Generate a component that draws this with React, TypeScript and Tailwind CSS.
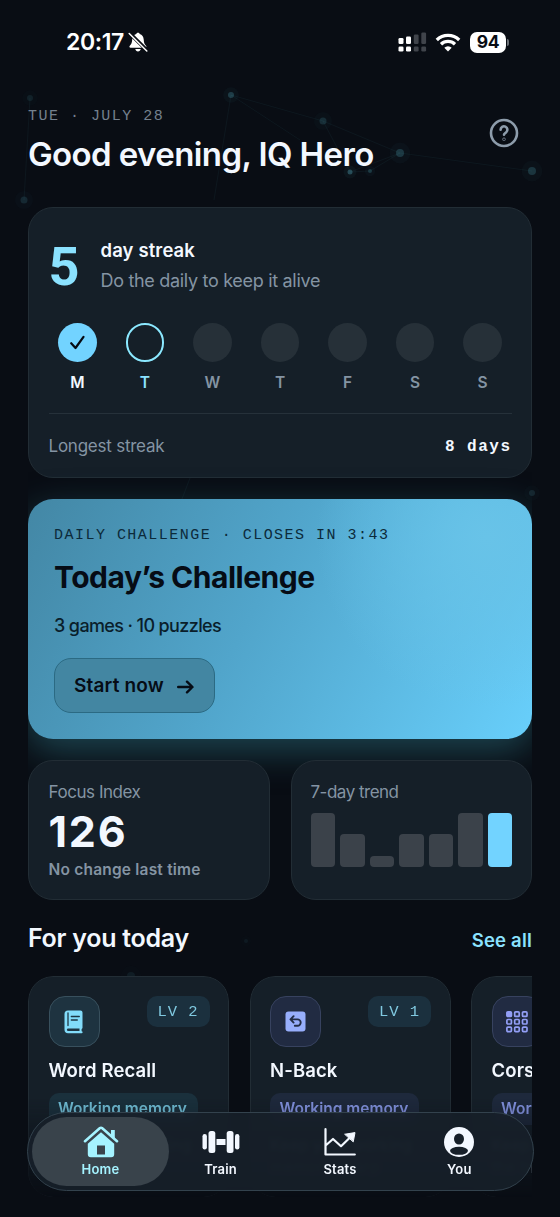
import React from 'react';
import clsx from 'clsx';

interface Game {
  name: string;
  level: number;
  blurb: string[];
  icon: React.ReactNode;
  violet?: boolean;
}

const days = ['M', 'T', 'W', 'T', 'F', 'S', 'S'];
const trend = [53.5, 32.5, 10.5, 32.5, 32.5, 53.5, 53.5];

// Dots and links of the faint network behind the page
const nodes = [
  [30, 98, 3, 0.16], [231, 95, 3, 0.38], [323, 121, 3.5, 0.26], [400, 153, 4, 0.34], [350, 172, 2.5, 0.5], [370, 171, 2, 0.34],
  [532, 171, 4, 0.32], [24, 200, 3.5, 0.22], [532, 493, 3, 0.2], [131, 976, 4, 0.12], [246, 941, 2, 0.1],
];
const links = [
  [231, 95, 323, 121], [231, 95, 300, 140], [323, 121, 400, 153], [323, 121, 350, 172],
  [350, 172, 370, 171], [370, 171, 400, 153], [350, 172, 400, 153], [400, 153, 532, 171], [30, 98, 24, 200],
  [231, 95, 214, 200], [190, 478, 182, 499],
];

const games: Game[] = [
  { name: 'Word Recall', level: 2, blurb: ['Remember, sorting', 'words in order'], icon: <BookIcon /> },
  { name: 'N-Back', level: 1, blurb: ['Keep your working', 'memory sharp'], icon: <BackIcon />, violet: true },
  { name: 'Corsi Blocks', level: 1, blurb: ['Keep track of', 'the blocks'], icon: <GridIcon />, violet: true },
];

function BookIcon() {
  return (
    <svg width="20" height="24" viewBox="0 0 20 24" fill="none">
      <path d="M4 .5h12.500a2 2 0 0 1 2 2v15.200a1.300 1.300 0 0 1-.9 1.200v2.300a1 1 0 0 1 0 2H4A3.500 3.500 0 0 1 .5 19.800V4A3.500 3.500 0 0 1 4 .5Z" fill="#82dcfa" />
      <path d="M4 2.800v12.700M7.300 6.500h8M7.300 10h6" stroke="#1e3644" strokeWidth="1.300" strokeLinecap="round" />
      <path d="M4.200 18.500h11.300v2.600H4.200a1.300 1.300 0 0 1 0-2.600Z" fill="#1e3644" />
    </svg>
  );
}

function BackIcon() {
  return (
    <svg width="21" height="21" viewBox="0 0 21 21" fill="none">
      <rect x=".5" y=".5" width="20" height="20" rx="3" fill="#97aefc" />
      <path d="M8.600 5.200 5.500 8.400l3.100 3.200M5.800 8.400h6.700a3.200 3.200 0 0 1 0 6.400H9.800" stroke="#232d46" strokeWidth="1.900" strokeLinecap="round" strokeLinejoin="round" />
    </svg>
  );
}

function GridIcon() {
  return (
    <svg width="22" height="22" viewBox="0 0 22 22" fill="none" stroke="#929ef5" strokeWidth="1.700">
      {[0, 1, 2].map((r) =>
        [0, 1, 2].map((c) => (
          <rect key={`${r}${c}`} x={0.9 + c * 7.8} y={0.9 + r * 7.6} width="4.500" height="4.500" rx="1" fill={r + c === 0 ? '#929ef5' : 'none'} />
        ))
      )}
    </svg>
  );
}

function HomeIcon() {
  return (
    <svg width="36" height="32" viewBox="0 0 36 32" fill="none">
      <path d="M28 4h3.800v9L28 9.800Z" fill="#a5f3ff" />
      <path d="M2 15.200 16.700 2.300a2 2 0 0 1 2.600 0L34 15.200" stroke="#a5f3ff" strokeWidth="2.600" strokeLinecap="round" />
      <path fillRule="evenodd" d="M18 6.300 31.200 17.800v10.400a3 3 0 0 1-3 3H7.800a3 3 0 0 1-3-3V17.800ZM14 19.500v9h8v-9Z" fill="#a5f3ff" />
    </svg>
  );
}

function TrainIcon() {
  return (
    <svg width="38" height="24" viewBox="0 0 38 24" fill="#f3f8ff">
      <rect x=".5" y="4" width="4.400" height="15.500" rx="2.200" />
      <rect x="6.500" y="1" width="6.800" height="22" rx="2.500" />
      <rect x="14.500" y="9" width="9" height="6" />
      <rect x="24.700" y="1" width="6.800" height="22" rx="2.500" />
      <rect x="33" y="4" width="4.400" height="15.500" rx="2.200" />
    </svg>
  );
}

function StatsIcon() {
  return (
    <svg width="32" height="28" viewBox="0 0 32 28" fill="none" stroke="#f3f8ff" strokeWidth="2.200" strokeLinecap="round" strokeLinejoin="round">
      <path d="M1.500 1.200v25.300h29.300M2.200 17 9 11l8 7.200L26 9.500" />
      <path d="M21 6.200 31 4.600 29.300 13.500Z" fill="#f3f8ff" strokeWidth="1" />
    </svg>
  );
}

function YouIcon() {
  return (
    <svg width="30" height="30" viewBox="0 0 30 30">
      <circle cx="15" cy="15" r="15" fill="#f3f8ff" />
      <ellipse cx="15" cy="12" rx="5" ry="5.500" fill="#17202a" />
      <ellipse cx="15" cy="23.800" rx="9" ry="4" fill="#17202a" />
    </svg>
  );
}

function BellOffIcon() {
  return (
    <svg width="20" height="20" viewBox="0 0 20 20" fill="none">
      <path d="M10 .8c.9 0 1.500.5 1.700 1.300 2.500.7 3.800 2.700 4 5.300.2 3.200.7 4.600 2.300 6.400.8.9.4 1.900-.8 1.900H2.600c-1.200 0-1.600-1-.8-1.900 1.600-1.800 2.200-3.200 2.400-6.400.2-2.600 1.600-4.600 4.100-5.300C8.500 1.300 9.100.8 10 .8ZM7.300 17h5.400c-.3 1.500-1.300 2.400-2.700 2.400S7.600 18.500 7.300 17Z" fill="#fff" />
      <path d="M1.600 1.200 19 18.400" stroke="#090d14" strokeWidth="3.800" />
      <path d="M1.200 1.500 18.800 19" stroke="#fff" strokeWidth="1.500" strokeLinecap="round" />
    </svg>
  );
}

function StatusBar() {
  return (
    <div className="flex h-[84px] items-center justify-between pr-[51px] pl-[66px] text-white">
      <div className="flex items-center gap-[4px]">
        <span className="w-[58px] text-[23px] font-semibold tracking-[-0.400px] whitespace-nowrap">20:17</span>
        <BellOffIcon />
      </div>
      <div className="flex items-center">
        <svg width="29" height="20" viewBox="0 0 29 20" fill="#fff">
          <rect x=".5" y="6" width="5" height="6" rx="1.300" />
          <rect x="8" y="4.500" width="5" height="7.500" rx="1.300" />
          <g fill="#40444b">
            <rect x="15.800" y="2.500" width="4.800" height="9.500" rx="1.300" />
            <rect x="23.300" y=".5" width="4.800" height="11.500" rx="1.300" />
            <rect x="15.800" y="14.500" width="4.800" height="5" rx="1.300" />
            <rect x="23.300" y="14.500" width="4.800" height="5" rx="1.300" />
          </g>
          <rect x=".5" y="14.500" width="5" height="5" rx="1.300" />
          <rect x="8" y="14.500" width="5" height="5" rx="1.300" />
        </svg>
        <svg className="ml-2" width="26" height="19" viewBox="0 0 26 19" fill="none" stroke="#fff" strokeWidth="3.300">
          <path d="M1.800 7a16 16 0 0 1 22.400 0M6 11.200a10.200 10.200 0 0 1 14 0" />
          <path d="M13 18.500 9.300 14.800a5.300 5.300 0 0 1 7.400 0Z" fill="#fff" stroke="none" />
        </svg>
        <div className="ml-[9px] flex h-[21px] w-[36px] items-center justify-center rounded-[7px] bg-white text-[17.500px] leading-none font-bold tracking-[-0.400px] text-[#090d14]">94</div>
        <div className="ml-px h-[7px] w-[2px] rounded-r-full bg-[#6b6f75]" />
      </div>
    </div>
  );
}

function StreakCard() {
  return (
    <section className="h-[271px] rounded-[25px] border border-[#222d35] bg-[#151f28] px-[19.500px]">
      <div className="flex h-[115px] items-center">
        <span className="w-[52px] pt-[2px] font-[Roboto] text-[54px] leading-none font-bold text-[#8be2ff]">5</span>
        <div>
          <div className="text-[18.500px] leading-[27px] font-semibold tracking-[0.120px] text-[#f3f8ff]">day streak</div>
          <div className="mt-[3px] text-[18px] leading-[27px] tracking-[-0.310px] text-[#8494a3]">Do the daily to keep it alive</div>
        </div>
      </div>
      <div className="flex gap-[9.600px]">
        {days.map((day, i) => (
          <div key={i} className="flex flex-1 flex-col items-center">
            <div
              className={clsx(
                'flex size-[38.500px] items-center justify-center rounded-full',
                i === 0 && 'bg-[#72d3ff]',
                i === 1 && 'border-[2.500px] border-[#8be8ff]',
                i > 1 && 'bg-[#263038]'
              )}
            >
              {i === 0 && (
                <svg width="15" height="15" viewBox="0 0 15 15" fill="none" stroke="#060a12" strokeWidth="2.200" strokeLinecap="round" strokeLinejoin="round">
                  <path d="M1.200 8.200 5.500 13 13.500 1.800" />
                </svg>
              )}
            </div>
            <span
              className={clsx(
                'mt-[10px] text-[15.500px] leading-[21px] font-semibold',
                i === 0 ? 'text-[#f3f8ff]' : i === 1 ? 'text-[#8be2ff]' : 'text-[#8494a3]'
              )}
            >
              {day}
            </span>
          </div>
        ))}
      </div>
      <div className="mt-5 flex h-[66px] items-center justify-between border-t border-[#26313a] pt-[2px]">
        <span className="text-[17px] tracking-[-0.230px] text-[#8494a3]">Longest streak</span>
        <span className="font-['Liberation_Mono',monospace] text-[16px] font-bold tracking-[1.500px] text-[#f3f8ff]">8 days</span>
      </div>
    </section>
  );
}

function ChallengeCard() {
  return (
    <section className="mt-[21px] h-[240px] rounded-[25px] bg-[radial-gradient(circle_at_91%_16%,#68c3e8_0%,#68c3e800_34%),linear-gradient(117deg,#4387a5_0%,#51a5cb_45%,#68cffb_100%)] px-[26px] pt-[26px] text-[#060c15] shadow-[0_12px_36px_#2f7c8c80]">
      <div className="font-['Liberation_Mono',monospace] text-[15px] leading-[22px] tracking-[1.480px] text-[#0c2a3a]">DAILY CHALLENGE · CLOSES IN 3:43</div>
      <h2 className="mt-[11px] text-[30px] leading-[38px] font-bold tracking-[-0.500px]">Today’s Challenge</h2>
      <p className="mt-[17px] text-[18px] leading-[26px] font-medium tracking-[-0.620px] text-[#0a1e2b]">3 games · 10 puzzles</p>
      <button className="mt-[19px] flex h-[55px] w-[161px] items-center gap-[13px] rounded-[17px] border border-[#2b6a83] bg-[#4386a2] pt-[2px] pl-[19px] text-[19px] font-semibold tracking-[0.170px] whitespace-nowrap">
        Start now
        <svg className="shrink-0" width="17" height="14" viewBox="0 0 17 14" fill="none" stroke="#060c15" strokeWidth="2.400" strokeLinecap="round" strokeLinejoin="round">
          <path d="M1.200 7h14M10 1.700 15.500 7 10 12.300" />
        </svg>
      </button>
    </section>
  );
}

function GameCard({ name, level, blurb, icon, violet }: Game) {
  return (
    <article className="h-[221px] w-[201px] shrink-0 rounded-[25px] border border-[#222d35] bg-[#151f28] mask-linear-[180deg] mask-linear-from-55% mask-linear-from-black mask-linear-to-100% mask-linear-to-transparent px-[19.500px] pt-[19px]">
      <div className="flex items-start justify-between">
        <div
          className={clsx(
            'flex size-[51px] items-center justify-center rounded-[16px] border',
            violet ? 'border-[#37425f] bg-[#212b42]' : 'border-[#38505d] bg-[#1e3340]'
          )}
        >
          {icon}
        </div>
        <div className="-mr-px flex h-[31px] w-[63px] items-center justify-center rounded-[10px] bg-[#1b303e] pt-[2px] font-['Liberation_Mono',monospace] text-[15.500px] tracking-[1px] whitespace-pre text-[#80c9e0]">LV {level}</div>
      </div>
      <h3 className="mt-[10px] text-[18.500px] leading-[26px] font-semibold tracking-[0.120px] whitespace-nowrap text-[#f3f8ff]">{name}</h3>
      <div
        className={clsx(
          'mt-[10px] flex h-[32px] w-[149px] items-center rounded-[10px] pl-[9.500px] text-[15.500px] font-semibold whitespace-nowrap',
          violet ? 'bg-[#1e293c] text-[#8292df]' : 'bg-[#1a303c] text-[#70bdd5]'
        )}
      >
        Working memory
      </div>
      <div className="mt-[9px] text-[16px] leading-[22px] whitespace-nowrap text-[#7a8997]">
        {blurb.map((line) => <div key={line}>{line}</div>)}
      </div>
    </article>
  );
}

function TabBar() {
  const tabs = [
    { label: 'Home', icon: <HomeIcon /> },
    { label: 'Train', icon: <TrainIcon /> },
    { label: 'Stats', icon: <StatsIcon /> },
    { label: 'You', icon: <YouIcon /> },
  ];

  return (
    <nav className="absolute top-[1112px] left-[27px] h-[79px] w-[507px] rounded-full border border-[#33424d] bg-[#172029eb] py-[4px] pr-[14px] pl-[12px] backdrop-blur-[2px]">
      <div className="flex h-full">
        {tabs.map((tab, i) => (
          <div
            key={tab.label}
            className={clsx(
              'flex flex-col items-center',
              i === 0 ? '-mx-[8px] w-[137px] rounded-full bg-[#39434b] text-[#a5f3ff]' : 'flex-1 text-[#f3f8ff]'
            )}
          >
            <div className="mt-[8px] flex h-[34px] items-center">{tab.icon}</div>
            <span className="mt-[1.500px] text-[13px] leading-[16px] font-semibold tracking-[0.200px]">{tab.label}</span>
          </div>
        ))}
      </div>
    </nav>
  );
}

export default function App() {
  return (
    <div className="relative h-[1217px] w-[560px] overflow-hidden bg-[#090d14] font-[Inter,sans-serif]">
      <svg className="absolute inset-0" width="560" height="1217" fill="#3f8090">
        {links.map(([x1, y1, x2, y2], i) => (
          <line key={i} x1={x1} y1={y1} x2={x2} y2={y2} stroke="#4a98a8" strokeOpacity=".07" />
        ))}
        {nodes.map(([x, y, r, opacity], i) => (
          <g key={i}>
            <circle cx={x} cy={y} r={r * 2.6} opacity={opacity * 0.14} />
            <circle cx={x} cy={y} r={r} opacity={opacity} />
          </g>
        ))}
      </svg>

      <div className="relative">
        <StatusBar />
        <header className="flex h-[123px] items-start justify-between pr-[41px] pl-[28px]">
          <div className="pt-[22px]">
            <div className="font-['Liberation_Mono',monospace] text-[15px] leading-[22px] tracking-[1.480px] text-[#74808d]">TUE · JULY 28</div>
            <h1 className="mt-[4px] text-[33px] leading-[44px] font-semibold tracking-[-0.600px] whitespace-nowrap text-[#f3f8ff]">Good evening, IQ Hero</h1>
          </div>
          <svg className="mt-[34px]" width="30" height="30" viewBox="0 0 30 30" fill="none" stroke="#8d9cab" strokeWidth="2.600" strokeLinecap="round">
            <circle cx="15" cy="15" r="13" />
            <path d="M11.600 11.700a3.400 3.400 0 1 1 5.600 2.600c-1.300 1-2.200 1.500-2.200 2.500" />
            <circle cx="15" cy="21.200" r=".3" />
          </svg>
        </header>

        <main className="mx-[28px] overflow-hidden">
          <StreakCard />
          <ChallengeCard />
          <div className="relative mt-[21px] grid h-[140px] grid-cols-2 gap-[21px]">
            <section className="rounded-[25px] border border-[#222d35] bg-[#151f28] px-[19.500px] pt-[19px]">
              <div className="text-[17px] leading-[25px] tracking-[-0.450px] text-[#8494a3]">Focus Index</div>
              <div className="mt-[1.500px] text-[43px] leading-[48px] font-bold tracking-[1.800px] text-[#f3f8ff]">126</div>
              <div className="mt-[3px] text-[15.500px] leading-[24px] font-semibold tracking-[0.200px] text-[#8494a3]">No change last time</div>
            </section>
            <section className="rounded-[25px] border border-[#222d35] bg-[#151f28] px-[19px] pt-[19px]">
              <div className="text-[17px] leading-[25px] tracking-[-0.500px] text-[#8494a3]">7-day trend</div>
              <div className="mt-[7.500px] flex h-[54px] items-end gap-[5px]">
                {trend.map((height, i) => (
                  <div key={i} className={clsx('flex-1 rounded-[4px]', i === 6 ? 'bg-[#72d3ff]' : 'bg-[#3b424a]')} style={{ height }} />
                ))}
              </div>
            </section>
          </div>
          <div className="flex h-[76px] items-center justify-between pt-px">
            <h2 className="text-[25px] font-semibold tracking-[-0.270px] text-[#f3f8ff]">For you today</h2>
            <span className="pt-[5px] text-[18.500px] font-semibold tracking-[0.200px] text-[#8be2ff]">See all</span>
          </div>
          <div className="flex gap-[20.500px] overflow-hidden">
            {games.map((game) => <GameCard key={game.name} {...game} />)}
          </div>
        </main>
      </div>

      <TabBar />
    </div>
  );
}
